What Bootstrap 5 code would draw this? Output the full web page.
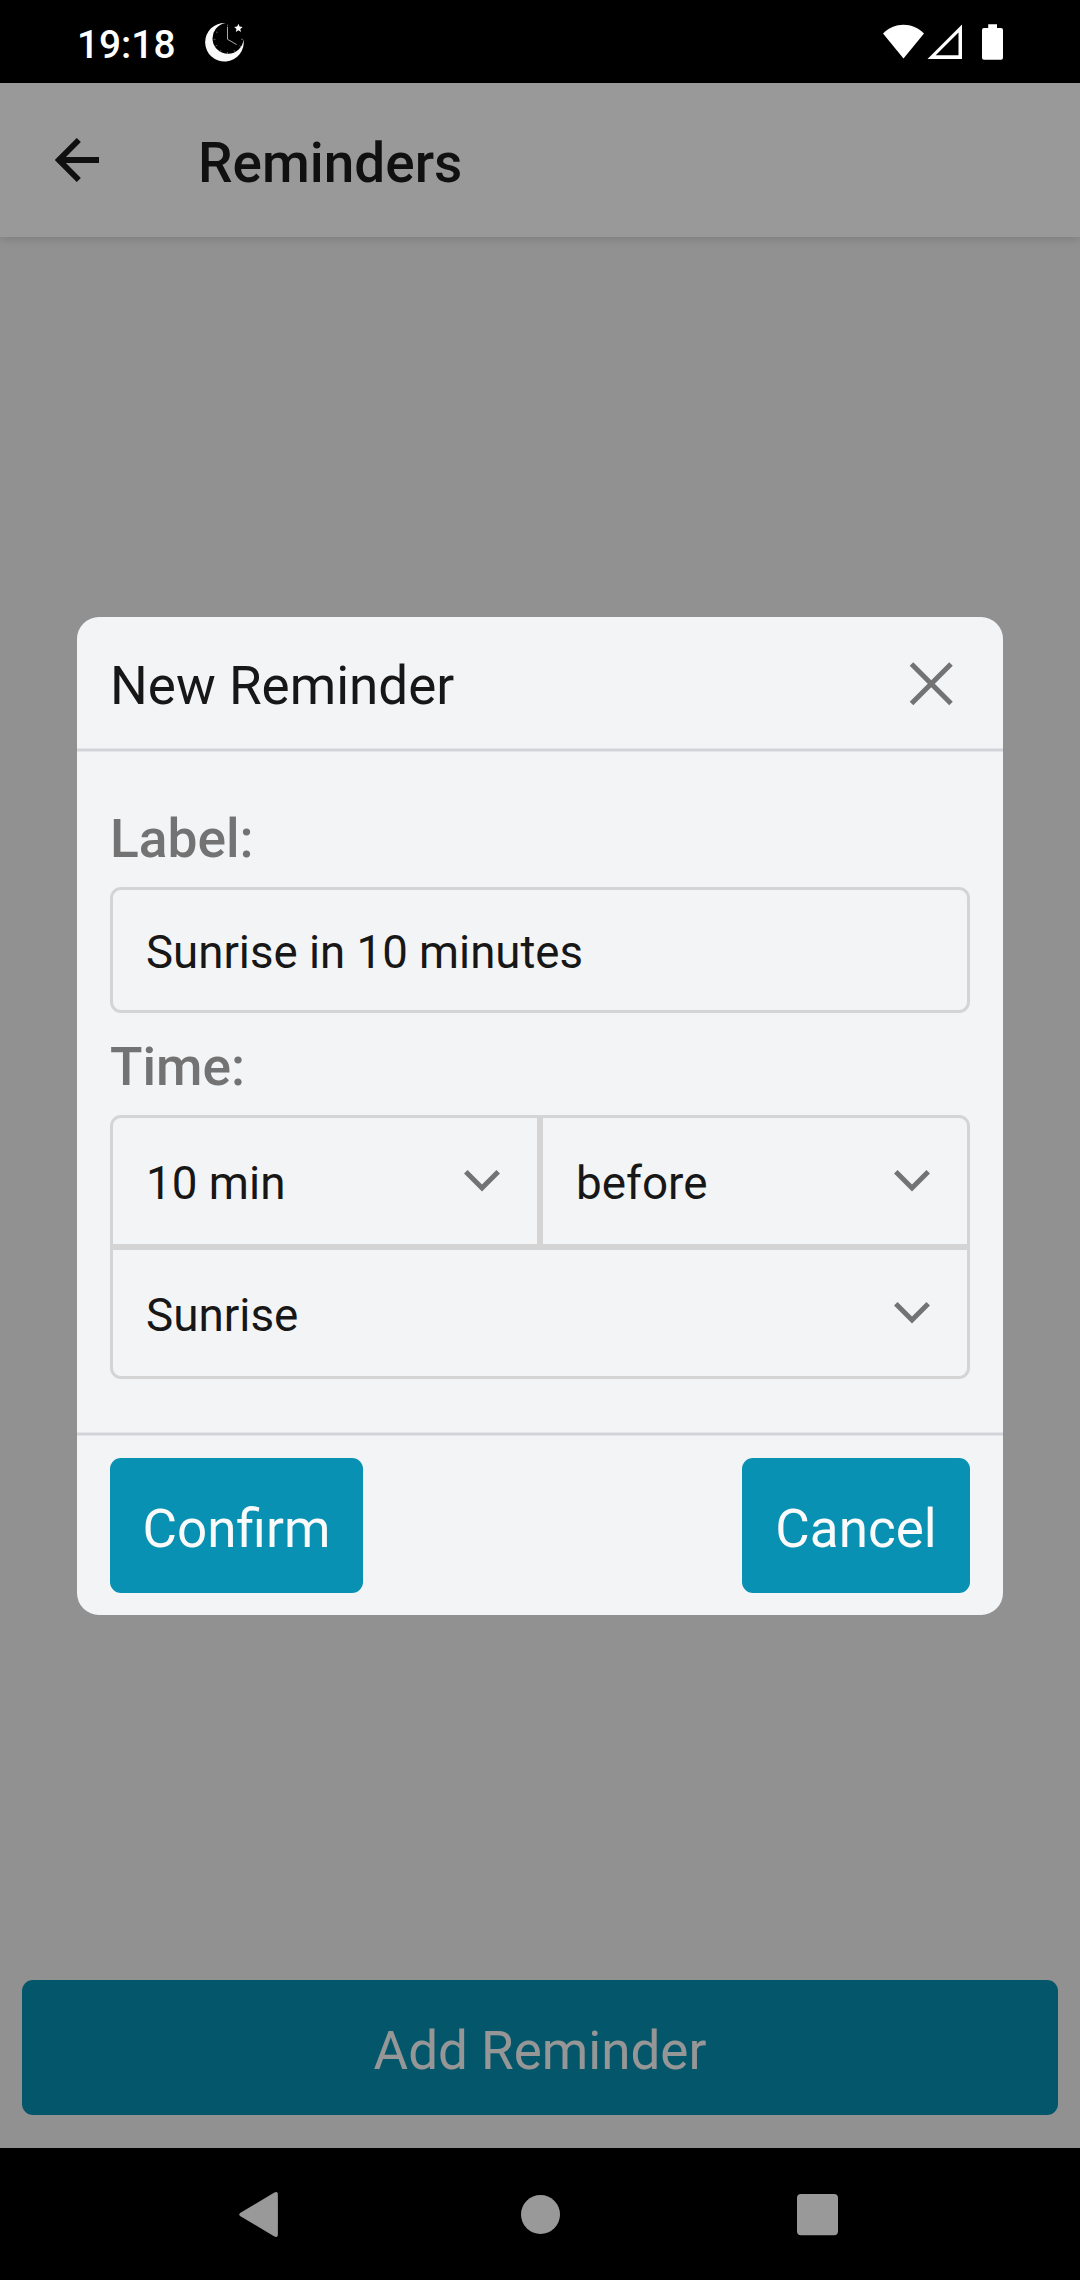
<!DOCTYPE html>
<html lang="en">
<head>
<meta charset="utf-8">
<meta name="viewport" content="width=device-width, initial-scale=1">
<title>Reminders</title>
<link rel="stylesheet" href="https://cdn.jsdelivr.net/npm/bootstrap@5.3.0/dist/css/bootstrap.min.css">
<style>
  body { font-family: Roboto, "Noto Sans", sans-serif; color: #171717; background: #000; }
  svg { display: block; flex: none; }
  .phone { width: 1080px; height: 2280px; overflow: hidden; }
  .status-bar { height: 83px; padding: 0 77px 0 77px; color: #fff; }
  .clock { font-size: 38.8px; font-weight: 500; line-height: 46px; padding-top: 6px; }
  .moon { margin-left: 27px; }
  .stage { background: #f2f2f2; }
  .app-bar { height: 154px; background: #fff; padding: 0 55px; gap: 99px; box-shadow: 0 2px 9px rgba(0,0,0,.15); color: #1c1c1c; }
  .app-title { font-size: 54.9px; font-weight: 500; line-height: 64px; padding-top: 5px; }
  .add-area { padding: 0 22px 33px; }
  .btn-teal, .btn-teal:hover { background: #0891b2; color: #fafafa; border: 0; border-radius: 11px; font-size: 53px; line-height: 64px; height: 135px; padding: 7px 0 0; }
  .btn-confirm { width: 253px; }
  .btn-cancel { width: 228px; }
  .scrim { background: rgba(0,0,0,.4); padding-top: 1px; }
  .dialog-card { width: 926px; border: 0; border-radius: 22px; background: #f3f4f6; color: #171717; }
  .dialog-head { height: 131px; padding: 0 48px 0 33px; border: 0; }
  .dialog-title { font-size: 53px; font-weight: 400; line-height: 64px; padding-top: 7px; }
  .rule { height: 4px; background: #d2d2da; border: solid #e4e5e9; border-width: 1px 0; }
  .dialog-body { padding: 55px 33px 53px; }
  .field-label { font-size: 53.3px; font-weight: 500; line-height: 64px; color: #737373; margin-bottom: 16px; display: block; }
  .text-field, .text-field:focus { height: 126px; border: 3px solid #d4d4d4; border-radius: 11px; background: transparent; color: #171717; font-size: 45.6px; line-height: 54px; padding: 5px 33px 0; margin-bottom: 22px; box-shadow: none; }
  .picker { border: 3px solid #d4d4d4; border-radius: 11px; background: #d4d4d4; gap: 6px; overflow: hidden; }
  .pick-row { gap: 6px; }
  .pick { height: 126px; border: 0; background: #f3f4f6; color: #171717; font-size: 45.8px; line-height: 54px; padding: 0 37px 0 33px; flex: 1 1 0; }
  .pick-stack { flex: none; }
  .pick span { padding-top: 5px; }
  .dialog-foot { padding: 22px 33px; }
  .nav-bar { height: 132px; }
</style>
<script src="https://cdn.jsdelivr.net/npm/bootstrap@5.3.0/dist/js/bootstrap.bundle.min.js"></script>
</head>
<body>
<div class="phone d-flex flex-column">
  <div class="status-bar d-flex align-items-center">
    <span class="clock">19:18</span>
    <!-- crescent with a clock dial and star -->
    <svg class="moon" width="44" height="44" viewBox="202 21 44 44">
      <path fill="#fafafa" d="M225.500 24 A19.300 19.300 0 1 0 243.500 40.300 A15.500 15.500 0 1 1 225.500 24Z"/>
      <path d="M227.500 28V40.300L236.700 45.600" fill="none" stroke="#a8a8a8" stroke-width="1"/>
      <path d="M227.500 25.500v2M241 40.300h2M227.500 53v2M213.500 40.300h2M220 52.800l1 -1.600M215.500 47.200l1.600 -1M234 51.200l1 1.600M239.400 46.700l1.600 1M216 32.800l1.500 1" fill="none" stroke="#777" stroke-width=".8"/>
      <path fill="#fff" d="M238.400 24.800l1.200 2.800 3 .3 -2.300 2 .7 3 -2.600 -1.600 -2.600 1.600 .7 -3 -2.300 -2 3 -.3z"/>
    </svg>
    <svg class="ms-auto" width="120" height="38" viewBox="883 24 120 38" fill="#fff">
      <path d="M883 34.500C894 22.900 913 22.900 924 34.500L903.500 59.500Z"/>
      <path fill-rule="evenodd" d="M962 25.500V60H927.500ZM958.500 33.500L935.700 56.300H958.500Z"/>
      <path d="M988.200 25.300H997V29H1001a2 2 0 0 1 2 2V58.700a2 2 0 0 1 -2 2H984a2 2 0 0 1 -2 -2V31a2 2 0 0 1 2 -2H988.200Z"/>
    </svg>
  </div>

  <main class="stage position-relative flex-grow-1 d-flex flex-column">
    <header class="app-bar d-flex align-items-center">
      <svg width="44" height="44" viewBox="55 138 44 44" fill="none" stroke="#1c1c1c" stroke-width="5.800"><path d="M99 160H59.500M78.800 140L58.900 160L78.800 180"/></svg>
      <h1 class="app-title mb-0">Reminders</h1>
    </header>
    <div class="add-area mt-auto"><button class="btn btn-teal w-100" type="button">Add Reminder</button></div>

    <div class="scrim position-absolute top-0 start-0 w-100 h-100 d-flex align-items-center justify-content-center">
      <div class="dialog-card modal-content" role="dialog" aria-labelledby="dlg">
        <div class="dialog-head d-flex align-items-center justify-content-between">
          <h2 class="dialog-title mb-0" id="dlg">New Reminder</h2>
          <svg width="48" height="48" viewBox="0 0 48 48" fill="none" stroke="#737373" stroke-width="5"><path d="M4.500 5L44 44.500M44 5L4.500 44.500"/></svg>
        </div>
        <div class="rule"></div>
        <div class="dialog-body">
          <label class="field-label" for="lbl">Label:</label>
          <input class="form-control text-field" id="lbl" type="text" value="Sunrise in 10 minutes">
          <span class="field-label">Time:</span>
          <div class="picker d-flex flex-column">
            <div class="pick-row d-flex">
              <button class="pick d-flex align-items-center justify-content-between" type="button"><span>10 min</span><svg width="36" height="22" viewBox="0 0 36 22" fill="none" stroke="#737373" stroke-width="5"><path d="M1.800 1.800L18 18L34.200 1.800"/></svg></button>
              <button class="pick d-flex align-items-center justify-content-between" type="button"><span>before</span><svg width="36" height="22" viewBox="0 0 36 22" fill="none" stroke="#737373" stroke-width="5"><path d="M1.800 1.800L18 18L34.200 1.800"/></svg></button>
            </div>
            <button class="pick pick-stack d-flex align-items-center justify-content-between" type="button"><span>Sunrise</span><svg width="36" height="22" viewBox="0 0 36 22" fill="none" stroke="#737373" stroke-width="5"><path d="M1.800 1.800L18 18L34.200 1.800"/></svg></button>
          </div>
        </div>
        <div class="rule"></div>
        <div class="dialog-foot d-flex justify-content-between">
          <button class="btn btn-teal btn-confirm" type="button">Confirm</button>
          <button class="btn btn-teal btn-cancel" type="button">Cancel</button>
        </div>
      </div>
    </div>
  </main>

  <nav class="nav-bar">
    <svg width="1080" height="132" viewBox="0 2148 1080 132" fill="#999">
      <path d="M240.500 2212.700L274 2192.700Q277.900 2190.500 277.900 2195V2234Q277.900 2238.500 274 2236.300L240.500 2216.300Q238 2214.500 240.500 2212.700Z"/>
      <circle cx="540.500" cy="2214.500" r="19.500"/>
      <rect x="797" y="2194" width="41" height="41.300" rx="4"/>
    </svg>
  </nav>
</div>
</body>
</html>
